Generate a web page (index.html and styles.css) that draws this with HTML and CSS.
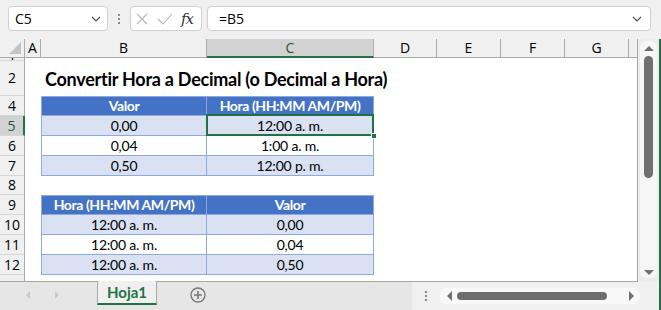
FILE: index.html
```html
<!DOCTYPE html>
<html lang="es">
<head>
  <meta charset="UTF-8" />
  <title>Convertir Hora a Decimal</title>
  <link rel="stylesheet" href="styles.css">
</head>
<body>
  <div class="formula-bar">
    <div class="name-box">
      <span>C5</span>
      <svg class="chevron" width="10" height="6" viewBox="0 0 10 6"><path d="M1 1 L5 5 L9 1" fill="none" stroke="#555" stroke-width="1.2"/></svg>
    </div>
    <div class="grip"><i></i><i></i><i></i></div>
    <div class="fx-box">
      <svg width="12" height="12" viewBox="0 0 12 12"><path d="M1 1 L11 11 M11 1 L1 11" stroke="#b4b4b4" stroke-width="1.1"/></svg>
      <svg width="16" height="12" viewBox="0 0 16 12"><path d="M1 6 L6 11 L15 1" fill="none" stroke="#b4b4b4" stroke-width="1.1"/></svg>
      <span class="fx">fx</span>
    </div>
    <div class="formula-input">
      <span>=B5</span>
      <svg class="chevron" width="10" height="6" viewBox="0 0 10 6"><path d="M1 1 L5 5 L9 1" fill="none" stroke="#555" stroke-width="1.2"/></svg>
    </div>
  </div>

  <div class="workspace">
    <div class="sheet">
      <div class="col-heads">
        <div class="corner"><span class="corner-tri"></span></div>
        <div class="col-head col-a">A</div>
        <div class="col-head col-b">B</div>
        <div class="col-head col-c active">C</div>
        <div class="col-head col-d">D</div>
        <div class="col-head col-e">E</div>
        <div class="col-head col-f">F</div>
        <div class="col-head col-g">G</div>
        <div class="col-head col-h"></div>
      </div>
      <div class="sheet-body">
        <div class="row-heads">
          <div class="row-head r-tiny">1</div>
          <div class="row-head r-title">2</div>
          <div class="row-head">4</div>
          <div class="row-head active">5</div>
          <div class="row-head">6</div>
          <div class="row-head">7</div>
          <div class="row-head r-gap">8</div>
          <div class="row-head">9</div>
          <div class="row-head">10</div>
          <div class="row-head">11</div>
          <div class="row-head">12</div>
        </div>
        <div class="cells">
          <div class="title-row">Convertir Hora a Decimal (o Decimal a Hora)</div>

          <div class="data-table">
            <div class="cell head">Valor</div>
            <div class="cell head">Hora (HH:MM AM/PM)</div>
            <div class="cell band">0,00</div>
            <div class="cell band selected">12:00 a. m.<span class="fill-handle"></span></div>
            <div class="cell">0,04</div>
            <div class="cell">1:00 a. m.</div>
            <div class="cell band">0,50</div>
            <div class="cell band">12:00 p. m.</div>
          </div>

          <div class="gap-row"></div>

          <div class="data-table">
            <div class="cell head">Hora (HH:MM AM/PM)</div>
            <div class="cell head">Valor</div>
            <div class="cell band">12:00 a. m.</div>
            <div class="cell band">0,00</div>
            <div class="cell">12:00 a. m.</div>
            <div class="cell">0,04</div>
            <div class="cell band">12:00 a. m.</div>
            <div class="cell band">0,50</div>
          </div>
        </div>
      </div>
    </div>
    <div class="vscroll">
      <div class="v-track">
        <span class="arrow up"></span>
        <span class="v-thumb"></span>
        <span class="v-space"></span>
        <span class="arrow down"></span>
      </div>
    </div>
  </div>

  <div class="tab-bar">
    <div class="tabs">
      <span class="nav left"></span>
      <span class="nav right"></span>
      <div class="tab">Hoja1</div>
      <svg class="add-sheet" width="16" height="16" viewBox="0 0 16 16"><circle cx="8" cy="8" r="7" fill="none" stroke="#7a7a7a" stroke-width="1.4"/><path d="M8 4 V12 M4 8 H12" stroke="#7a7a7a" stroke-width="1.6"/></svg>
    </div>
    <div class="h-area">
      <div class="grip h"><i></i><i></i><i></i></div>
      <div class="h-track">
        <span class="arrow left"></span>
        <span class="h-thumb"></span>
        <span class="arrow right"></span>
      </div>
    </div>
  </div>
</body>
</html>
```

FILE: styles.css
```css
* {
  box-sizing: border-box;
}

body {
  margin: 0;
  width: 661px;
  height: 310px;
  overflow: hidden;
  background: #f0f0f0;
  font-family: "Open Sans", "Noto Sans", sans-serif;
  color: #000;
}

/* formula bar */

.formula-bar {
  height: 39px;
  display: flex;
  align-items: flex-start;
  padding: 6px 0 0 8px;
  background: #f0f0f0;
}

.name-box,
.fx-box,
.formula-input {
  height: 25px;
  background: #fff;
  border: 1px solid #d0d0d0;
  border-radius: 4px;
  display: flex;
  align-items: center;
}

.name-box {
  width: 100px;
  padding: 0 6px 0 6px;
  justify-content: space-between;
  font-size: 14px;
}

.grip {
  width: 22px;
  height: 25px;
  display: flex;
  flex-direction: column;
  align-items: center;
  justify-content: center;
  gap: 2px;
}

.grip i {
  width: 2px;
  height: 2px;
  background: #8a8a8a;
}

.fx-box {
  width: 72px;
  padding: 0 4px 0 5px;
  gap: 9px;
}

.fx {
  font-family: "DejaVu Serif", "Liberation Serif", serif;
  font-style: italic;
  font-size: 15px;
  color: #333;
  margin-left: -1px;
  letter-spacing: -1px;
}

.formula-input {
  width: 444px;
  margin-left: 5px;
  padding: 0 8px 0 11px;
  justify-content: space-between;
  font-size: 14px;
}

/* sheet */

.workspace {
  height: 243px;
  display: flex;
}

.sheet {
  width: 638px;
  display: flex;
  flex-direction: column;
  border-right: 1px solid #a8a8a8;
  border-bottom: 1px solid #a8a8a8;
}

.col-heads {
  height: 19px;
  display: flex;
  background: #f0f0f0;
  border-bottom: 1px solid #ababab;
  font-size: 14px;
}

.corner {
  width: 25px;
  position: relative;
  border-right: 1px solid #ababab;
}

.corner-tri {
  position: absolute;
  right: 3px;
  bottom: 3px;
  width: 0;
  height: 0;
  border-left: 12px solid transparent;
  border-bottom: 12px solid #c4c4c4;
}

.col-head {
  border-right: 1px solid #ababab;
  text-align: center;
  line-height: 18px;
}

.col-head.active {
  background: #d2d2d2;
  color: #185c37;
  border-bottom: 2px solid #217346;
  margin-bottom: -1px;
}

.col-a { width: 16px; }
.col-b { width: 166px; }
.col-c { width: 167px; }
.col-d { width: 63px; }
.col-e { width: 64px; }
.col-f { width: 64px; }
.col-g { width: 64px; }
.col-h { flex: 1; border-right: none; }

.sheet-body {
  flex: 1;
  display: flex;
  overflow: hidden;
}

.row-heads {
  width: 25px;
  background: #f0f0f0;
  border-right: 1px solid #ababab;
  font-size: 14px;
}

.row-head {
  height: 20px;
  line-height: 19px;
  text-align: center;
  border-bottom: 1px solid #d6d6d6;
  overflow: hidden;
}

.row-head.r-tiny {
  height: 3px;
  line-height: 0;
  padding-top: 1px;
}

.row-head.r-title {
  height: 35px;
  line-height: 34px;
}

.row-head.r-gap {
  height: 19px;
  line-height: 18px;
}

.row-head.active {
  background: #d2d2d2;
  color: #185c37;
  border-right: 2px solid #217346;
  margin-right: -1px;
}

.cells {
  flex: 1;
  background: #fff;
  padding-left: 16px;
  font-family: Lato, "Open Sans", sans-serif;
  font-size: 14px;
  letter-spacing: -0.2px;
}

.title-row {
  height: 38px;
  padding: 9px 0 0 4px;
  font-size: 18px;
  font-weight: bold;
  letter-spacing: -0.25px;
  line-height: 24px;
}

.gap-row {
  height: 19px;
}

.data-table {
  width: 333px;
  display: grid;
  grid-template-columns: 166px 167px;
  grid-auto-rows: 20px;
}

.cell {
  position: relative;
  text-align: center;
  line-height: 19px;
  border-right: 1px solid #8ea9db;
  border-bottom: 1px solid #8ea9db;
}

.cell:nth-child(odd) {
  border-left: 1px solid #8ea9db;
}

.cell.head {
  background: #4472c4;
  color: #fff;
  font-weight: bold;
  letter-spacing: -0.4px;
  border-top: 1px solid #8ea9db;
  line-height: 18px;
}

.cell.band {
  background: #d9e1f2;
}

.cell.selected::after {
  content: "";
  position: absolute;
  top: -2px;
  left: -1px;
  right: -1px;
  bottom: -1px;
  border: 2px solid #217346;
}

.fill-handle {
  position: absolute;
  right: -4px;
  bottom: -4px;
  width: 6px;
  height: 6px;
  background: #217346;
  border: 1px solid #fff;
  z-index: 2;
}

/* scrollbars */

.vscroll {
  flex: 1;
  background: #ececec;
  border-right: 2px solid #217346;
  padding: 2px 2px 4px 2px;
}

.v-track {
  height: 100%;
  background: #f6f6f6;
  border-radius: 6px;
  display: flex;
  flex-direction: column;
  align-items: center;
  padding: 5px 0 3px;
}

.v-thumb {
  width: 9px;
  height: 122px;
  margin-top: 5px;
  background: #707070;
  border-radius: 5px;
}

.v-space {
  flex: 1;
}

.arrow {
  width: 0;
  height: 0;
}

.arrow.up {
  border-left: 5px solid transparent;
  border-right: 5px solid transparent;
  border-bottom: 5px solid #707070;
}

.arrow.down {
  border-left: 5px solid transparent;
  border-right: 5px solid transparent;
  border-top: 5px solid #707070;
}

.arrow.left {
  border-top: 5px solid transparent;
  border-bottom: 5px solid transparent;
  border-right: 5px solid #707070;
}

.arrow.right {
  border-top: 5px solid transparent;
  border-bottom: 5px solid transparent;
  border-left: 5px solid #707070;
}

/* sheet tabs */

.tab-bar {
  height: 28px;
  display: flex;
  background: #e6e6e6;
  border-right: 2px solid #217346;
}

.tabs {
  width: 412px;
  display: flex;
  align-items: flex-start;
}

.nav {
  width: 0;
  height: 0;
  margin-top: 9px;
  border-top: 4px solid transparent;
  border-bottom: 4px solid transparent;
}

.nav.left {
  margin-left: 26px;
  border-right: 4px solid #c8c8c8;
}

.nav.right {
  margin-left: 25px;
  border-left: 4px solid #c8c8c8;
}

.tab {
  width: 60px;
  height: 24px;
  margin-left: 38px;
  margin-top: -1px;
  background: #f0f0f0;
  border-left: 1px solid #a8a8a8;
  border-right: 1px solid #a8a8a8;
  border-bottom: 2px solid #217346;
  color: #217346;
  font-family: Lato, "Open Sans", sans-serif;
  font-weight: bold;
  font-size: 15px;
  text-align: center;
  line-height: 22px;
}

.add-sheet {
  margin: 5px 0 0 33px;
}

.h-area {
  flex: 1;
  display: flex;
  align-items: center;
  background: #f0f0f0;
  padding-right: 19px;
}

.grip.h {
  width: 28px;
  height: 28px;
}

.h-track {
  flex: 1;
  height: 16px;
  background: #f8f8f8;
  border-radius: 6px;
  display: flex;
  align-items: center;
  padding: 0 6px 0 7px;
}

.h-thumb {
  width: 150px;
  height: 8px;
  margin-left: 5px;
  margin-right: auto;
  background: #707070;
  border-radius: 4px;
}
```
